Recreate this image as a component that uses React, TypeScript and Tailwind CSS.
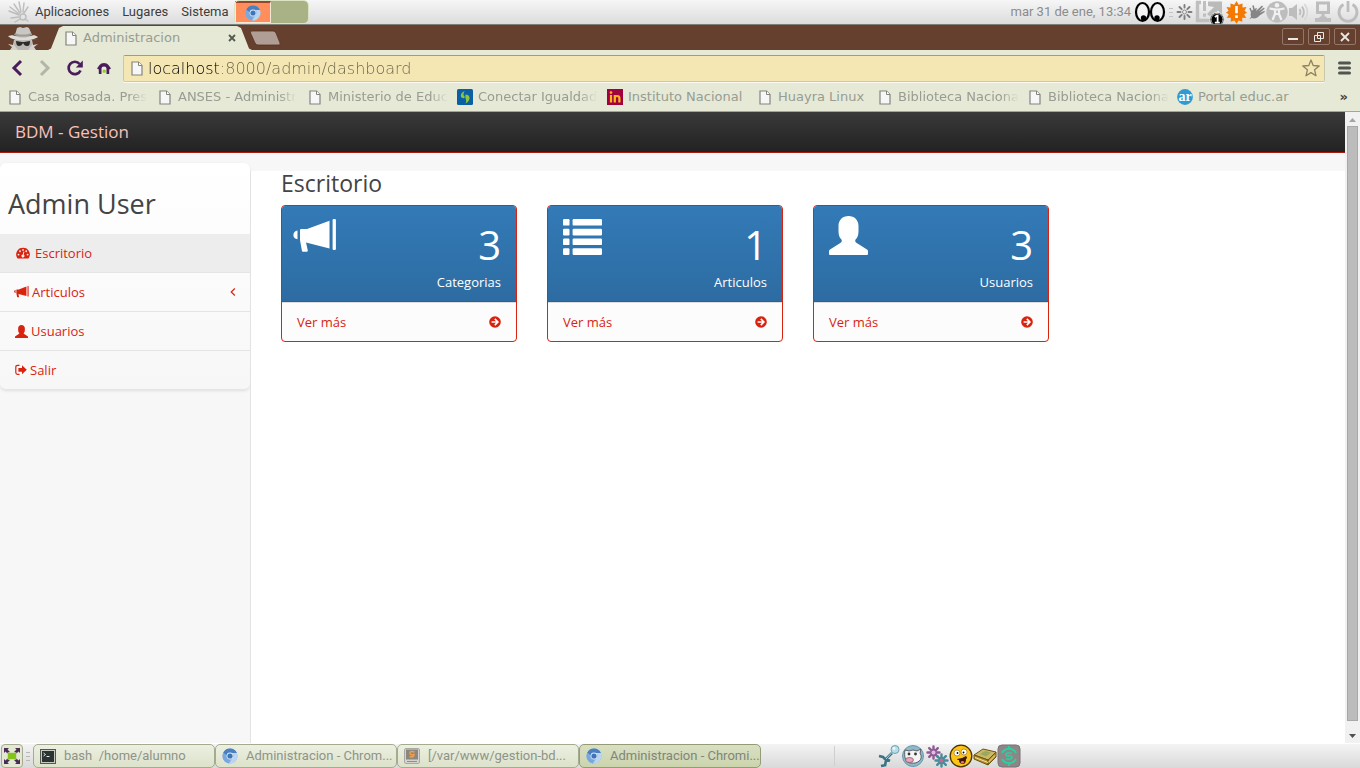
import React from "react";

const panelFont = "font-['Roboto','Noto_Sans',sans-serif]";
const chromeFont = "font-['DejaVu_Sans',sans-serif]";

function DocIcon() {
  return (
    <svg width="12" height="15" viewBox="0 0 12 15" className="shrink-0" aria-hidden="true">
      <path d="M1 1h6.5L11 4.5V14H1z" fill="#f7f7f7" stroke="#83847f" strokeWidth="1.2" />
      <path d="M7.5 1v3.5H11" fill="#fff" stroke="#83847f" strokeWidth="1" />
    </svg>
  );
}

function ChromiumIcon() {
  return (
    <svg width="16" height="16" viewBox="0 0 16 16" className="shrink-0" aria-hidden="true">
      <circle cx="8" cy="8" r="7.5" fill="#86b3e4" />
      <path d="M1.200 4.800A7.500 7.500 0 0 1 14.900 5H8a3 3 0 0 0-3 2.500z" fill="#4a7fc0" />
      <path d="M1.200 4.800 5.200 10A3.200 3.200 0 0 0 8.500 11.200L7 15.400A7.500 7.500 0 0 1 1.200 4.800z" fill="#78a8de" />
      <path d="M14.900 5A7.500 7.500 0 0 1 7 15.400L10.600 10A3.200 3.200 0 0 0 10.400 5z" fill="#b9d5f2" />
      <circle cx="8" cy="8" r="3.400" fill="#dfeaf6" />
      <circle cx="8" cy="8" r="2.600" fill="#3f74b8" />
    </svg>
  );
}

function HuayraIcon() {
  return (
    <svg width="22" height="22" viewBox="0 0 22 22" aria-hidden="true">
      <g stroke="#bdbdbd" strokeWidth="1.4" strokeLinecap="round" fill="none">
        <path d="M11 14 1 10M11 13 2 6M12 12 6 3M13 11 11 1M15 11 16 2M16 12 20 6M11 16l-8 1M12 18l-5 3" />
        <circle cx="15" cy="16" r="3" />
        <path d="M17 18l3 2" />
      </g>
    </svg>
  );
}

function IncognitoIcon() {
  return (
    <svg width="34" height="24" viewBox="0 0 34 24" aria-hidden="true">
      <path d="M1 13l7 1-1 5-5-1 4 3-2 3h26l-2-3 4-3-5 1-1-5 7-1-6 1H8z" fill="#d5d2ce" />
      <path d="M9 10h16l1 9-4 5H12l-4-5z" fill="#b9b5b1" />
      <path d="M9 9 11 2l3-1 3 1 4-1 2 1 3 7z" fill="#c9c7c4" />
      <path d="M9 7c4 2 12 2 16 0l1 2c-5 2-13 2-18 0z" fill="#a09b96" />
      <path d="M2 10c4-1 5-1 7 0 5 2 11 2 16 0 2-1 4-1 7 1-5 4-25 5-30-1z" fill="#dedcd9" />
      <path d="M10 15l6 1 2 0 6-1c0 4-1 5-3 5s-3-1-4-3c-1 2-2 3-4 3s-3-2-3-5z" fill="#2b2b2b" />
    </svg>
  );
}

function BullhornIcon({ className }: { className: string }) {
  return (
    <svg viewBox="0 0 44 39" className={className} fill="currentColor" aria-hidden="true">
      <path d="M4.500 14.500C2 14.800.4 16.500.4 19s1.600 4 4.100 4.200z" />
      <path d="M7 14q0-1 1-1h6L36.500 4.700v27.800L13 26.400l1.800 8.200q.2 1.100-.8 1.100h-4q-.9 0-1.100-1L7 24z" />
      <rect x="39.600" y="3" width="3.300" height="31" rx="1" />
    </svg>
  );
}

function ListIcon({ className }: { className: string }) {
  return (
    <svg viewBox="0 0 39 39" className={className} fill="currentColor" aria-hidden="true">
      {[3, 12.8, 22.5, 32.3].map((y) => (
        <g key={y}>
          <rect x="0" y={y} width="6.500" height="6.600" rx="1.200" />
          <rect x="9.600" y={y} width="29.400" height="6.600" rx="1.200" />
        </g>
      ))}
    </svg>
  );
}

function UserIcon({ className }: { className: string }) {
  return (
    <svg viewBox="0 0 39 39" className={className} fill="currentColor" aria-hidden="true">
      <path d="M19.500 0C25.500 0 29.500 4 29.500 10v5c0 4-1 6.500-2.500 8q-.8.700-.8 1.600c0 1.400.5 1.700 1.500 2.300L38 33.500q1 .7 1 1.700V38q0 1-1 1H1q-1 0-1-1v-2.800q0-1 1-1.700l10.300-6.600c1-.6 1.500-.9 1.500-2.300q0-.9-.8-1.600c-1.500-1.500-2.500-4-2.500-8v-5c0-6 4-10 10-10z" />
    </svg>
  );
}

function GaugeIcon() {
  return (
    <svg width="14" height="12" viewBox="0 0 14 12" className="shrink-0" aria-hidden="true">
      <path d="M7 .8a6.700 6.700 0 0 1 5.700 10.400q-.2.400-.6.400H1.900q-.4 0-.6-.4A6.700 6.700 0 0 1 7 .8z" fill="#d9230f" />
      <g fill="#ededed">
        <circle cx="2.500" cy="7.600" r=".95" />
        <circle cx="4" cy="4.200" r=".95" />
        <circle cx="7" cy="2.900" r=".95" />
        <circle cx="10.200" cy="4.200" r=".95" />
        <circle cx="11.600" cy="7.600" r=".95" />
        <path d="M7.500 4.500l.9.200-.7 3a1.500 1.500 0 1 1-1-.2z" />
      </g>
    </svg>
  );
}

function SignOutIcon() {
  return (
    <svg width="12" height="12" viewBox="0 0 12 12" className="shrink-0" aria-hidden="true">
      <path d="M4.500 1.300H2.600Q.8 1.300.8 3v5.500q0 1.800 1.800 1.800h1.900" fill="none" stroke="#d9230f" strokeWidth="1.200" />
      <path d="M7 1.300 11.800 5.800 7 10.300V7.700H3.400V3.900H7z" fill="#d9230f" />
    </svg>
  );
}

function ArrowCircleIcon() {
  return (
    <svg width="12" height="12" viewBox="0 0 12 12" aria-hidden="true">
      <circle cx="6" cy="6" r="5.800" fill="#d9230f" />
      <path d="M2.600 6h6M5.800 2.900 8.900 6 5.800 9.100" stroke="#fff" strokeWidth="1.600" fill="none" />
    </svg>
  );
}

function TopTray() {
  return (
    <div className="flex items-center" aria-label="Indicadores">
      <svg width="32" height="24" viewBox="0 0 32 24" aria-hidden="true">
        <ellipse cx="8.500" cy="12" rx="6.500" ry="9" fill="#f4f4f4" stroke="#000" strokeWidth="2.200" />
        <ellipse cx="23.500" cy="12" rx="6.500" ry="9" fill="#f4f4f4" stroke="#000" strokeWidth="2.200" />
        <circle cx="9.500" cy="18" r="2.700" />
        <circle cx="23" cy="18" r="2.700" />
      </svg>
      <svg width="10" height="24" viewBox="0 0 10 24" aria-hidden="true">
        <path d="M3 8.500h4M3 12.500h4M3 16.500h4" stroke="#c2c2c2" />
      </svg>
      <svg width="18" height="24" viewBox="0 0 18 24" aria-hidden="true">
        <g stroke="#7e7e7e" strokeWidth="1.900" strokeLinecap="round">
          <path d="M8.500 5v2.500M8.500 16v3M1.500 12h3M12.500 12h3M3.500 7l2.200 2.200M11.300 14.800l2.200 2.200M3.500 17l2.200-2.200M11.300 9.200 13.500 7" />
        </g>
        <circle cx="8.500" cy="12" r="2" fill="none" stroke="#8f8f8f" />
      </svg>
      <svg width="31" height="24" viewBox="0 0 31 24" aria-hidden="true">
        <path d="M7 2.500H3.500v18H16" fill="none" stroke="#bfbfbf" strokeWidth="3.400" />
        <path d="M14 1.500h14v13l-4-4-7 7-4-3.500 7-7-6-1z" fill="#bababa" />
        <path d="M10.500 1v10M10.500 13.500v3.200" stroke="#bfbfbf" strokeWidth="3" />
        <circle cx="23" cy="19.500" r="7.200" fill="#000" stroke="#f1f1f1" />
        <circle cx="23" cy="19.500" r="6" fill="none" stroke="#fff" strokeWidth=".7" />
        <path d="M20.800 17l2.200-1.300h.6v7M20.800 22.600h5" fill="none" stroke="#fff" strokeWidth="1.800" />
      </svg>
      <svg width="23" height="24" viewBox="0 0 23 24" aria-hidden="true">
        <path d="M11.500 1l2.200 3.800L17.500 3.500v4l4-.5-2 3.800 2.500 1.700-2.800 2 2 3.500-4-.2.100 4-3.700-1.400-2.100 3.300-2.100-3.300-3.700 1.400.1-4-4 .2 2-3.500L1 12.500l2.500-1.700-2-3.800 4 .5v-4l3.800 1.300z" fill="#f57900" />
        <path d="M11.500 6v7.200M11.500 15.300v2.700" stroke="#fff" strokeWidth="2.600" />
      </svg>
      <svg width="18" height="24" viewBox="0 0 18 24" aria-hidden="true">
        <path d="M1 19.500l2-2.500c-1-4 0-6 3-8l3-1-1 3 6-5.500 1 1-4.500 5 5.500-4 .6 1.200-5 4.300 4.800-2.300.4 1.200-5.200 3.600c-2 2.500-5 3.500-8 2.500z" fill="#858585" />
        <path d="M2 8l1.500 4M5 5.500l1 4" stroke="#858585" strokeWidth="1.500" />
      </svg>
      <svg width="22" height="24" viewBox="0 0 22 24" aria-hidden="true">
        <circle cx="11" cy="12" r="10.700" fill="#bdbdbd" />
        <circle cx="11" cy="5.200" r="2.300" fill="#f1f1f1" />
        <path d="M3.500 8.500 9 9.500V14l-2.500 6M18.500 8.500 13 9.500V14l2.500 6M9 9.500h4V14H9z" fill="none" stroke="#f1f1f1" strokeWidth="2.200" />
      </svg>
      <svg width="22" height="24" viewBox="0 0 22 24" aria-hidden="true">
        <path d="M1 8h3l5-4v16l-5-4H1z" fill="#bdbdbd" />
        <path d="M11.500 9q2 3 0 6M14 6.500q3.800 5.500 0 11" fill="none" stroke="#bdbdbd" strokeWidth="1.800" />
        <path d="M16.500 4q6 8 0 16" fill="none" stroke="#d6d6d6" strokeWidth="1.500" />
      </svg>
      <svg width="24" height="24" viewBox="0 0 24 24" aria-hidden="true">
        <path d="M7.500 3h11v9.500h-11zM13 13v4" fill="none" stroke="#bdbdbd" strokeWidth="3" />
        <path d="M5 22v-4h4l1-1.500h6l1 1.500h4v4z" fill="#bdbdbd" />
      </svg>
      <svg width="26" height="24" viewBox="0 0 26 24" aria-hidden="true">
        <path d="M9.500 4.500a9 9 0 1 0 9 0M14 1v11" fill="none" stroke="#bdbdbd" strokeWidth="2.800" />
      </svg>
    </div>
  );
}

function TopPanel() {
  return (
    <header className={`flex h-[25px] shrink-0 items-center border-b border-[#7d7f78] bg-linear-to-b from-[#f6f6f6] to-[#dcdcdc] text-[13px] leading-4 text-[#3c3c3c] ${panelFont}`}>
      <nav className="flex items-center pl-2" aria-label="Escritorio">
        <HuayraIcon />
        <button type="button" className="ml-[5px]">Aplicaciones</button>
        <button type="button" className="ml-[13px]">Lugares</button>
        <button type="button" className="ml-[13px]">Sistema</button>
      </nav>
      <div className="ml-[6px] flex h-[22px] w-[73px] rounded-sm bg-[#a8b284] outline outline-[#dbe3c4]">
        <button type="button" aria-label="Espacio 1" className="flex w-9 items-center justify-center border-x border-t-2 border-b border-[#f7e9d4] border-t-[#96472a] bg-[#ff8e5c]">
          <ChromiumIcon />
        </button>
        <button type="button" aria-label="Espacio 2" className="flex-1" />
      </div>
      <span className="mr-[3px] ml-auto text-[#8c8c8c]">mar 31 de ene, 13:34</span>
      <TopTray />
    </header>
  );
}

function WindowButton({ label, children }: { label: string; children: React.ReactNode }) {
  return (
    <button type="button" aria-label={label} className="flex h-[17px] w-[22px] items-center justify-center rounded-xs border border-[#93766a]">
      <svg width="12" height="12" viewBox="0 0 12 12" fill="none" stroke="#ebe7e4" aria-hidden="true">
        {children}
      </svg>
    </button>
  );
}

function TabStrip() {
  return (
    <div className={`flex h-[25px] shrink-0 bg-[#65402e] ${chromeFont}`}>
      <div className="flex w-12 items-end pl-[6px]"><IncognitoIcon /></div>
      <div className="mt-px flex w-[204px] items-center bg-[#e5e9d6] pl-[17px] text-[13px] leading-4 text-[#989c92] [clip-path:polygon(0_100%,3px_94%,11px_8%,15px_0,189px_0,193px_8%,201px_94%,100%_100%)]">
        <DocIcon />
        <span className="ml-[6px]">Administracion</span>
        <button type="button" aria-label="Cerrar pestaña" className="mr-[16px] ml-auto">
          <svg width="8" height="8" viewBox="0 0 8 8" aria-hidden="true"><path d="M1 1l6 6M7 1 1 7" stroke="#555a50" strokeWidth="1.800" /></svg>
        </button>
      </div>
      <button type="button" aria-label="Nueva pestaña" className="-ml-[3px] self-center">
        <svg width="32" height="16" viewBox="0 0 32 16" aria-hidden="true">
          <path d="M3 1h21q2 0 3 2l4 10q.5 2-1 2H9q-2 0-3-2L1.500 3Q1 1 3 1z" fill="#b09d95" stroke="#54321f" strokeWidth=".8" />
        </svg>
      </button>
      <div className="mr-1 ml-auto flex gap-1 pt-[3px]">
        <WindowButton label="Minimizar"><path d="M1 8h10" strokeWidth="2" /></WindowButton>
        <WindowButton label="Restaurar"><path d="M4.500 1.500h6v6h-6zM1.500 4.500h6v6h-6z" /></WindowButton>
        <WindowButton label="Cerrar"><path d="M2 2l8 8M10 2l-8 8" strokeWidth="1.800" /></WindowButton>
      </div>
    </div>
  );
}

function Toolbar() {
  return (
    <div className="flex h-9 shrink-0 items-center bg-[#e5e9d6] pr-2 pl-[10px]">
      <button type="button" aria-label="Atrás" className="w-7">
        <svg width="14" height="18" viewBox="0 0 14 18" aria-hidden="true"><path d="M11 2 4 9l7 7" fill="none" stroke="#4a1c5c" strokeWidth="3" /></svg>
      </button>
      <button type="button" aria-label="Adelante" className="w-7">
        <svg width="14" height="18" viewBox="0 0 14 18" aria-hidden="true"><path d="M3 2l7 7-7 7" fill="none" stroke="#b3b5a9" strokeWidth="3" /></svg>
      </button>
      <button type="button" aria-label="Recargar" className="w-[30px]">
        <svg width="18" height="18" viewBox="0 0 18 18" aria-hidden="true">
          <path d="M13.600 5A6.200 6.200 0 1 0 14.500 11.500" fill="none" stroke="#4a1c5c" strokeWidth="2.700" />
          <path d="M16.800 1.500v7h-7z" fill="#4a1c5c" />
        </svg>
      </button>
      <button type="button" aria-label="Inicio" className="w-[27px]">
        <svg width="16" height="16" viewBox="0 0 16 16" aria-hidden="true">
          <path d="M1 8.500 3.500 5Q5 3 8 3t4.500 2L15 8.500l-1.800 1V14h-2.700V8.500Q10.500 6.500 8 6.500T5.500 8.500V14H2.800V9.500z" fill="#4a1c5c" />
          <rect x="6.700" y="9.700" width="3" height="3" rx=".8" fill="#8ad11c" />
        </svg>
      </button>
      <div className="flex h-[27px] flex-1 items-center rounded-xs border border-[#c9c8ae] border-t-[#9c9c8c] bg-[#f4e7b4] pr-1 pl-[7px] shadow-[0_1px_0_#fafaf2]">
        <DocIcon />
        <input
          type="text"
          aria-label="Dirección"
          defaultValue="localhost:8000/admin/dashboard"
          className={`ml-[5px] min-w-0 flex-1 bg-linear-to-r from-black from-[72px] to-[#686347] to-[72px] bg-clip-text pt-px text-[16px] leading-5 font-extralight text-transparent outline-none ${chromeFont}`}
        />
        <button type="button" aria-label="Añadir a marcadores">
          <svg width="18" height="18" viewBox="0 0 18 18" aria-hidden="true">
            <path d="M9 1l2.200 5.500 6 .5-4.600 3.800L14 16.800 9 13.600l-5 3.200 1.400-6L.8 7l6-.5z" fill="none" stroke="#8a8466" strokeWidth="1.300" strokeLinejoin="round" />
          </svg>
        </button>
      </div>
      <button type="button" aria-label="Menú" className="ml-3">
        <svg width="15" height="14" viewBox="0 0 15 14" aria-hidden="true"><path d="M2.500 2h10M2.500 7h10M2.500 12h10" stroke="#50554e" strokeWidth="3" strokeLinecap="round" /></svg>
      </button>
    </div>
  );
}

type Bookmark = { label: string; width: string; faded: boolean; icon?: React.ReactNode };

const bookmarks: Bookmark[] = [
  { label: "Casa Rosada. Pres", width: "w-[139px]", faded: true },
  { label: "ANSES - Administr", width: "w-[139px]", faded: true },
  { label: "Ministerio de Educ", width: "w-[139px]", faded: true },
  {
    label: "Conectar Igualdad",
    width: "w-[139px]",
    faded: true,
    icon: (
      <svg width="16" height="16" viewBox="0 0 16 16" aria-hidden="true">
        <rect width="16" height="16" rx="1.500" fill="#0b5fa5" />
        <path d="M7.500 2Q3 4 4 8q1 1.500 3.500 1V7Q6 6.500 6.500 5zM8.500 5.500q3.500 0 4 3 0 4-4 6 1-2 .5-4Q8 9 8.500 5.500z" fill="#8cc63f" />
      </svg>
    ),
  },
  {
    label: "Instituto Nacional",
    width: "w-[139px]",
    faded: false,
    icon: (
      <svg width="16" height="16" viewBox="0 0 16 16" aria-hidden="true">
        <rect width="16" height="16" fill="#a3003f" />
        <path d="M4 6v7.500M7.800 13.500V6M7.800 9q0-2 2.300-2t2.300 2v4.500" stroke="#fbb81b" strokeWidth="2.200" fill="none" />
        <circle cx="4" cy="3.600" r="1.300" fill="#fbb81b" />
      </svg>
    ),
  },
  { label: "Huayra Linux", width: "w-[109px]", faded: false },
  { label: "Biblioteca Naciona", width: "w-[139px]", faded: true },
  { label: "Biblioteca Naciona", width: "w-[139px]", faded: true },
  {
    label: "Portal educ.ar",
    width: "w-[139px]",
    faded: false,
    icon: (
      <svg width="16" height="16" viewBox="0 0 16 16" aria-hidden="true">
        <circle cx="8" cy="8" r="7.900" fill="#2f9bd2" />
        <text x="8" y="12" fill="#fff" fontSize="14" fontWeight="bold" textAnchor="middle" fontFamily="Liberation Serif">ar</text>
      </svg>
    ),
  },
];

function BookmarksBar() {
  return (
    <nav aria-label="Marcadores" className={`flex h-[26px] shrink-0 items-center gap-[11px] border-b border-[#a2a59a] bg-[#e5e9d6] pr-3 pb-[3px] pl-[7px] text-[13px] leading-4 text-[#989c92] ${chromeFont}`}>
      {bookmarks.map((b, i) => (
        <a key={i} href="#" className={`flex shrink-0 items-center gap-[5px] ${b.width}`}>
          <span className="flex w-4 shrink-0 justify-center">{b.icon ?? <DocIcon />}</span>
          <span className={b.faded ? "whitespace-nowrap mask-r-from-85% mask-r-to-100%" : "whitespace-nowrap"}>
            {b.label}
          </span>
        </a>
      ))}
      <button type="button" aria-label="Más marcadores" className="ml-auto font-bold text-[#3c403a]">»</button>
    </nav>
  );
}

const menuRow = "flex h-[39px] items-center border-b border-[#e5e5e5] pl-[15px] text-[#d9230f]";

function Sidebar() {
  return (
    <aside className="w-[250px] shrink-0 pt-[10px]">
      <div className="rounded-md bg-linear-to-b from-white to-[#f7f7f7] shadow-[0_1px_3px_rgba(0,0,0,0.1)]">
        <h1 className="flex h-[71px] items-center pt-[10px] pl-2 text-[27px] leading-8 text-[#444]">Admin User</h1>
        <nav aria-label="Menú principal">
          <a href="#escritorio" className={`${menuRow} gap-[5px] bg-[#ededed]`}>
            <span className="pl-px"><GaugeIcon /></span>
            Escritorio
          </a>
          <a href="#articulos" className={`${menuRow} gap-[3px]`}>
            <BullhornIcon className="-ml-px w-[15px]" />
            Articulos
            <svg width="6" height="10" viewBox="0 0 6 10" className="mr-[14px] ml-auto" aria-hidden="true"><path d="M4.800 1.500 1.200 5l3.600 3.500" fill="none" stroke="#d9230f" strokeWidth="1.200" /></svg>
          </a>
          <a href="#usuarios" className={`${menuRow} gap-[3px]`}>
            <UserIcon className="w-[13px]" />
            Usuarios
          </a>
          <a href="#salir" className={`${menuRow} gap-[3px] rounded-b-md`}>
            <SignOutIcon />
            Salir
          </a>
        </nav>
      </div>
    </aside>
  );
}

const cards = [
  { label: "Categorias", count: 3, icon: <BullhornIcon className="-ml-1 w-11" /> },
  { label: "Articulos", count: 1, icon: <ListIcon className="w-[39px]" /> },
  { label: "Usuarios", count: 3, icon: <UserIcon className="w-[39px]" /> },
];

function Dashboard() {
  return (
    <main className="mt-[18px] flex-1 border-l border-[#e3e3e3] bg-white px-[30px]">
      <h2 className="pb-[9px] text-[23px] leading-[25px] text-[#444]">Escritorio</h2>
      <div className="grid grid-cols-4 gap-[30px]">
        {cards.map((c) => (
          <section key={c.label} className="rounded-sm border border-[#d9230f] bg-[#fcfcfc]">
            <div className="flex h-[96px] justify-between rounded-t-[3px] border-b border-[#d9230f] bg-linear-to-b from-[#337ab7] to-[#2d6ca2] px-[15px] pt-[10px] text-white">
              <div>{c.icon}</div>
              <div className="pt-[9px] text-right">
                <div className="text-[40px] leading-[40px]">{c.count}</div>
                <div className="pt-2 leading-[18px]">{c.label}</div>
              </div>
            </div>
            <a href="#ver" className="flex h-[39px] items-center justify-between border-t border-[#ddd] px-[15px] text-[#d9230f]">
              Ver más
              <ArrowCircleIcon />
            </a>
          </section>
        ))}
      </div>
    </main>
  );
}

function ScrollRail() {
  return (
    <div className="flex w-[15px] shrink-0 flex-col items-center bg-[#f1f1f1]" aria-hidden="true">
      <svg width="15" height="14" viewBox="0 0 15 14"><path d="M4 10h7L7.500 6z" fill="#a3a3a3" /></svg>
      <div className="w-[11px] flex-1 border border-[#a8a8a8] bg-[#bcbcbc]" />
      <svg width="15" height="22" viewBox="0 0 15 22"><path d="M4 13h7l-3.500 4z" fill="#505050" /></svg>
    </div>
  );
}

const tasks = [
  {
    label: "bash  /home/alumno",
    active: false,
    icon: (
      <svg width="16" height="15" viewBox="0 0 16 15" aria-hidden="true">
        <rect x=".5" y=".5" width="15" height="14" fill="#c8cac4" stroke="#555753" />
        <rect x="2" y="2" width="12" height="11" fill="#2a3431" />
        <path d="M3.500 4l2 1.500-2 1.500M6.500 7.500h3" stroke="#e6e6e6" fill="none" />
      </svg>
    ),
  },
  { label: "Administracion - Chrom...", active: false, icon: <ChromiumIcon /> },
  {
    label: "[/var/www/gestion-bd...",
    active: false,
    icon: (
      <svg width="16" height="16" viewBox="0 0 16 16" aria-hidden="true">
        <rect x=".5" y=".5" width="15" height="15" rx="1.500" fill="#d5d3cd" stroke="#aaa8a0" />
        <rect x="2" y="1.500" width="12" height="10" fill="#8a8781" />
        <path d="M10.500 4Q6 2.500 6 5t4 1.500Q10 10 5.500 8.500" stroke="#f0a04b" strokeWidth="1.500" fill="none" />
        <path d="M3 13.500h10" stroke="#8f8d86" />
      </svg>
    ),
  },
  { label: "Administracion - Chromi...", active: true, icon: <ChromiumIcon /> },
];

function Launchers() {
  return (
    <div className="flex items-center" aria-label="Lanzadores">
      <svg width="24" height="24" viewBox="0 0 24 24" aria-hidden="true">
        <circle cx="18" cy="5.500" r="4" fill="#b9dde8" stroke="#6fa3b4" />
        <circle cx="17" cy="4.500" r="1.400" fill="#eef8fb" />
        <path d="M15 9 9 15M2 12l4 1 3 3-1 6M9 15l4 2M4 22l5-1" stroke="#3b7284" strokeWidth="2.600" fill="none" />
        <path d="M15 8.500 9 15" stroke="#a6d4e2" />
      </svg>
      <svg width="24" height="24" viewBox="0 0 24 24" aria-hidden="true">
        <circle cx="12" cy="12" r="10.500" fill="#8fb8cb" stroke="#6b97ab" />
        <path d="M4 6l4 1q4-2 8 0l4-2-1 4c4 7-3 11-9 10-6 0-7-7-6-13z" fill="#f5f5f5" stroke="#333" strokeWidth=".7" />
        <circle cx="8" cy="10" r="1.400" fill="#333" /><circle cx="14.500" cy="10" r="1.400" fill="#333" />
        <ellipse cx="8.500" cy="16" rx="4" ry="2.500" fill="#eaa6bb" stroke="#7b4b58" strokeWidth=".7" />
      </svg>
      <svg width="24" height="24" viewBox="0 0 24 24" aria-hidden="true">
        <g strokeWidth="2.400" strokeLinecap="round">
          <path d="M8.500 2.500v12M2.500 8.500h12M4.200 4.200l8.600 8.600M12.800 4.200l-8.600 8.600" stroke="#8c5b92" />
          <path d="M16.500 10.500v12M10.500 16.500h12M12.200 12.200l8.600 8.600M20.800 12.200l-8.600 8.600" stroke="#4b8a9a" />
        </g>
        <circle cx="8.500" cy="8.500" r="2" fill="#e3b9e5" /><circle cx="16.500" cy="16.500" r="2" fill="#c8668c" />
      </svg>
      <svg width="24" height="24" viewBox="0 0 24 24" aria-hidden="true">
        <circle cx="12" cy="12" r="10.800" fill="#fcc419" stroke="#4a3100" strokeWidth="1.300" />
        <circle cx="8" cy="9" r="3" fill="#fff" stroke="#8a6508" strokeWidth=".6" /><circle cx="15" cy="8" r="3" fill="#fff" stroke="#8a6508" strokeWidth=".6" />
        <circle cx="8.500" cy="9" r=".9" /><circle cx="14.500" cy="8.500" r=".9" />
        <path d="M8 15q5 0 9-3 2 2 0 3 0 5-3 5-4 0-4-4-2 0-2-1z" fill="#3b1505" />
        <path d="M11.500 18q2-2 4 0-2 3-4 0z" fill="#e77a7a" />
      </svg>
      <svg width="24" height="24" viewBox="0 0 24 24" aria-hidden="true">
        <path d="M1 11 10 5l13 3-8 8z" fill="#c9b968" stroke="#6d5313" />
        <path d="M7 10l5-3 6 1.500-5 4z" fill="#9aa85f" />
        <path d="M1 11v4l14 6v-5zM15 16v5l8-8V8z" fill="#b5912a" stroke="#6d5313" />
        <path d="M2 13.500l13 5 7-7" stroke="#f1e3a6" fill="none" />
      </svg>
      <svg width="24" height="24" viewBox="0 0 24 24" aria-hidden="true">
        <rect x="1" y="1" width="22" height="22" rx="4" fill="#8e8587" stroke="#7a7375" />
        <path d="M5 9a8 8 0 0 1 14 0M5 15a8 8 0 0 0 14 0M12 2v3M12 19v3" fill="none" stroke="#2bd0a1" strokeWidth="2" />
        <path d="M15 9H10.500q-1.500 0-1.500 1.500T10.500 12h3q1.500 0 1.500 1.500T13.500 15H9" fill="none" stroke="#2bd0a1" strokeWidth="1.600" />
      </svg>
    </div>
  );
}

function TaskBar() {
  return (
    <footer className={`flex h-[25px] shrink-0 items-center border-t border-white bg-linear-to-b from-[#f4f4f4] to-[#d9d9d9] text-[13px] leading-4 text-[#8f9389] ${panelFont}`}>
      <button type="button" aria-label="Mostrar escritorio" className="ml-px flex h-6 w-[22px] items-center justify-center rounded-sm border border-[#a5ab8f] bg-[#e3e8d2]">
        <svg width="16" height="16" viewBox="0 0 16 16" aria-hidden="true">
          <path d="M0 0h5L3.500 1.500 6 4 4 6 1.500 3.500 0 5zM16 0v5l-1.500-1.500L12 6l-2-2 2.500-2.500L11 0zM16 16h-5l1.500-1.500L10 12l2-2 2.500 2.500L16 11zM0 16v-5l1.500 1.500L4 10l2 2-2.500 2.500L5 16z" fill="#4a2a57" />
          <rect x="3.500" y="4.500" width="9" height="7" rx="1" fill="#84c318" stroke="#e3e8d2" strokeWidth=".6" />
        </svg>
      </button>
      <svg width="10" height="24" viewBox="0 0 10 24" aria-hidden="true"><path d="M3 8.500h4M3 12.500h4M3 16.500h4" stroke="#b9b9b9" /></svg>
      <div className="flex">
        {tasks.map((t) => (
          <button
            key={t.label}
            type="button"
            className={`flex h-6 w-[182px] items-center gap-2 rounded-[5px] border pl-[6px] whitespace-pre ${t.active ? "border-[#949c75] bg-linear-to-b from-[#d9dfc2] to-[#ccd4ae] text-[#80857a]" : "border-[#a5ab8f] bg-linear-to-b from-[#ecf0e1] to-[#dde2cb]"}`}
          >
            {t.icon}
            {t.label}
          </button>
        ))}
      </div>
      <div className="flex flex-1 items-center pl-[73px]">
        <div className="mr-[42px] h-5 w-px bg-[#cfcfcf]" />
        <Launchers />
      </div>
    </footer>
  );
}

export default function App() {
  return (
    <div className="flex h-screen flex-col overflow-hidden bg-[#f7f7f7]">
      <TopPanel />
      <TabStrip />
      <Toolbar />
      <BookmarksBar />
      <div className="flex min-h-0 flex-1 font-['Open_Sans',sans-serif] text-[13px] leading-[18px]">
        <div className="flex min-w-0 flex-1 flex-col">
          <header className="flex h-[41px] shrink-0 items-center border-b border-[#a91b0c] bg-linear-to-b from-[#3a3a3a] to-[#222] px-[15px]">
            <a href="#inicio" className="text-[17px] leading-6 text-[#fac0b9]">BDM - Gestion</a>
          </header>
          <div className="flex min-h-0 flex-1">
            <Sidebar />
            <Dashboard />
          </div>
        </div>
        <ScrollRail />
      </div>
      <TaskBar />
    </div>
  );
}
